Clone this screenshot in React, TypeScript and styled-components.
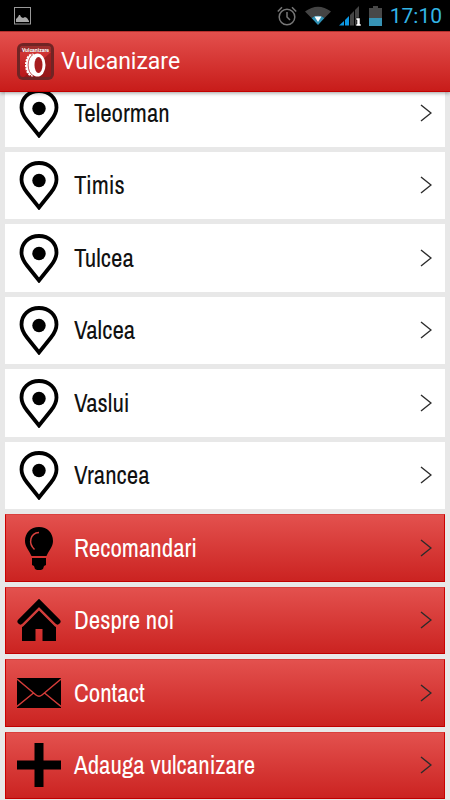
import React from "react";
import styled, { createGlobalStyle } from "styled-components";

const GlobalStyle = createGlobalStyle`
  * { box-sizing: border-box; }
  body { margin: 0; background: #e8e8e8; }
`;

const Screen = styled.div`
  display: flex;
  flex-direction: column;
  min-height: 100vh;
  padding-bottom: 1px;
`;

const TopBars = styled.div`
  position: sticky;
  top: 0;
  z-index: 1;
`;

const StatusBar = styled.div`
  display: flex;
  align-items: center;
  justify-content: space-between;
  height: 31px;
  padding: 1px 8px 0 14px;
  background: #000;
`;

const StatusGroup = styled.div`
  display: flex;
  align-items: center;
  gap: 8px;
`;

const Clock = styled.time`
  color: #33b5e5;
  font: 400 21px/30px Roboto, sans-serif;
`;

const AppBar = styled.header`
  display: flex;
  align-items: center;
  gap: 7px;
  height: 61px;
  padding: 0 17px;
  background: linear-gradient(#e3504d, #c81c1a);
  border-top: 1px solid #b5302d;
  border-bottom: 1px solid #c40000;
  box-shadow: 0 1px 4px rgba(0, 0, 0, 0.4);
`;

const Title = styled.h1`
  margin: 0;
  color: #fff;
  font: 400 23px/32px Roboto, sans-serif;
`;

const Menu = styled.nav`
  flex: 1;
  display: grid;
  grid-auto-rows: 1fr;
  gap: 5px;
  margin-top: -13px;
  padding: 0 5px;
`;

const Row = styled.a<{ $accent?: boolean }>`
  display: flex;
  align-items: center;
  gap: 13px;
  min-height: 64px;
  padding: 0 12px 0 11px;
  border: 1px solid;
  border-color: ${(p) => (p.$accent ? "#d9403d #cc0000 #c00000" : "#fff")};
  background: ${(p) => (p.$accent ? "linear-gradient(#e3514e, #cb2321)" : "#fff")};
  color: ${(p) => (p.$accent ? "#fff" : "#111")};
  text-decoration: none;
`;

const Label = styled.span`
  flex: 1;
  font: 400 25px/32px "Archivo Narrow", "Roboto Condensed", "Open Sans Condensed", Roboto, sans-serif;
`;

const Icon = styled.svg`
  display: block;
  flex: none;
`;

const PictureIcon = () => (
  <Icon width="17" height="18" viewBox="0 0 17 18" aria-hidden="true">
    <rect x=".5" y=".5" width="16" height="16.500" fill="none" stroke="#999" />
    <path d="M2 15v-3l2-2 1-2h1l1 2 2 1 2-1 2 1 2 3v1z" fill="#aaa" />
  </Icon>
);

const AlarmIcon = () => (
  <Icon width="20" height="20" viewBox="0 0 20 20" fill="none" stroke="#777" strokeWidth="1.500" aria-hidden="true">
    <circle cx="10" cy="11" r="7.800" />
    <path d="M10 6v5l3 3M.8 5.500L5 1.300M19.200 5.500L15 1.300" />
  </Icon>
);

const WifiIcon = () => (
  <Icon width="26" height="20" viewBox="0 0 26 20" aria-hidden="true">
    <path d="M0 5.500Q13-4 26 5.500L19.500 12Q13 8 6.500 12z" fill="#444" />
    <path d="M6.500 12Q13 7.500 19.500 12L13 19z" fill="#2f91b5" />
    <path d="M9.500 10.500H16.500L13 16z" fill="#fff" />
  </Icon>
);

const SignalIcon = () => (
  <Icon width="22" height="20" viewBox="0 0 22 20" aria-hidden="true">
    <path d="M0 19.500L5 15v4.500zM6 14l4-4v9.500H6z" fill="#0c98e4" />
    <path d="M11 9l4-4v14.500h-4zM16 4l4-4v19.500h-4z" fill="#444" />
    <path d="M17 12h4v6h1v2h-5v-2h1v-4h-1z" fill="#fff" stroke="#000" strokeWidth=".5" />
  </Icon>
);

const BatteryIcon = () => (
  <Icon width="13" height="20" viewBox="0 0 13 20" aria-hidden="true">
    <path d="M0 2h4V0h5v2h4v10H0z" fill="#484848" />
    <path d="M0 12h13v8H0z" fill="#3793b5" />
  </Icon>
);

const LogoIcon = () => (
  <Icon width="37" height="37" viewBox="0 0 37 37" aria-hidden="true">
    <defs>
      <linearGradient id="logo" x2="0" y2="1">
        <stop stopColor="#d83c3b" />
        <stop offset="1" stopColor="#b71719" />
      </linearGradient>
    </defs>
    <rect width="37" height="37" rx="6" fill="#702424" />
    <rect x="3" y="3" width="31" height="31" rx="3" fill="url(#logo)" />
    <path d="M34 9L7 34h24a3 3 0 0 0 3-3z" fill="#841719" opacity=".65" />
    <path d="M3 6a3 3 0 0 1 3-3h25a3 3 0 0 1 3 3v3H3z" fill="#702424" opacity=".55" />
    <text x="18.500" y="9" textAnchor="middle" fill="#fff" fontFamily="Archivo Narrow, Liberation Sans" fontWeight="700" fontSize="6">
      Vulcanizare
    </text>
    <ellipse cx="15" cy="22" rx="6" ry="10.500" fill="#fff" stroke="#fff" strokeWidth="2" strokeDasharray="2 1" />
    <ellipse cx="20.500" cy="22" rx="8" ry="11.500" fill="#fff" />
    <path d="M16 11.500C9.500 15 9.500 29 16 32.500" fill="none" stroke="#b32828" strokeWidth=".8" />
    <ellipse cx="21.500" cy="22" rx="4" ry="8" fill="#a61d1f" />
  </Icon>
);

const PinIcon = () => (
  <Icon width="44" height="50" viewBox="0 0 44 50" aria-hidden="true">
    <path d="M22 3C12 3 4.500 10 4.500 19.500c0 5 2.300 9 5.500 13L22 47.500l12-15c3.200-4 5.500-8 5.500-13C39.500 10 32 3 22 3z" fill="none" stroke="#000" strokeWidth="3.800" />
    <circle cx="22" cy="20.500" r="6.700" />
  </Icon>
);

const BulbIcon = () => (
  <Icon width="44" height="44" viewBox="0 0 44 44" aria-hidden="true">
    <path d="M22 1C13.500 1 8 7 8 15c0 6 4 9 6.500 15h15C32 24 36 21 36 15 36 7 30.500 1 22 1zM15 32h14v7l-2 1-1 3-2 1h-4l-2-1-1-3-2-1z" />
    <path d="M22 6.500c-9 .5-11 11-4.500 17" fill="none" stroke="#d6403d" strokeWidth="1.500" />
  </Icon>
);

const HomeIcon = () => (
  <Icon width="44" height="44" viewBox="0 0 44 44" aria-hidden="true">
    <path d="M3.500 23.500L22 5l18.500 18.500" fill="none" stroke="#000" strokeWidth="6" strokeLinecap="round" />
    <path d="M22 11.500L5 28v15h13.500V31h7v12H39V28z" />
    <path d="M5 28.500l17-17 17 17" fill="none" stroke="#d6403d" strokeWidth="1.400" />
  </Icon>
);

const MailIcon = () => (
  <Icon width="44" height="30" viewBox="0 0 44 30" aria-hidden="true">
    <path d="M0 0h44v30H0z" />
    <path d="M0 1l19 16q3 2.500 6 0L44 1M0 28.500L16.500 15M44 28.500L27.500 15" fill="none" stroke="#d43c39" strokeWidth="1.400" />
  </Icon>
);

const PlusIcon = () => (
  <Icon width="44" height="44" viewBox="0 0 44 44" aria-hidden="true">
    <path d="M17.500 0h9v17.500H44v9H26.500V44h-9V26.500H0v-9h17.500z" />
  </Icon>
);

const Chevron = () => (
  <Icon width="12" height="18" viewBox="0 0 12 18" aria-hidden="true">
    <path d="M1 1l10 8L1 17" fill="none" stroke="#2b2b2b" strokeWidth="1.400" />
  </Icon>
);

const counties = ["Teleorman", "Timis", "Tulcea", "Valcea", "Vaslui", "Vrancea"];

const actions = [
  { label: "Recomandari", Glyph: BulbIcon },
  { label: "Despre noi", Glyph: HomeIcon },
  { label: "Contact", Glyph: MailIcon },
  { label: "Adauga vulcanizare", Glyph: PlusIcon },
];

export default function App() {
  return (
    <>
      <GlobalStyle />
      <Screen>
        <TopBars>
          <StatusBar>
            <PictureIcon />
            <StatusGroup>
              <AlarmIcon />
              <WifiIcon />
              <SignalIcon />
              <BatteryIcon />
              <Clock>17:10</Clock>
            </StatusGroup>
          </StatusBar>
          <AppBar>
            <LogoIcon />
            <Title>Vulcanizare</Title>
          </AppBar>
        </TopBars>
        <Menu>
          {counties.map((name) => (
            <Row key={name} href="#">
              <PinIcon />
              <Label>{name}</Label>
              <Chevron />
            </Row>
          ))}
          {actions.map(({ label, Glyph }) => (
            <Row key={label} href="#" $accent>
              <Glyph />
              <Label>{label}</Label>
              <Chevron />
            </Row>
          ))}
        </Menu>
      </Screen>
    </>
  );
}
